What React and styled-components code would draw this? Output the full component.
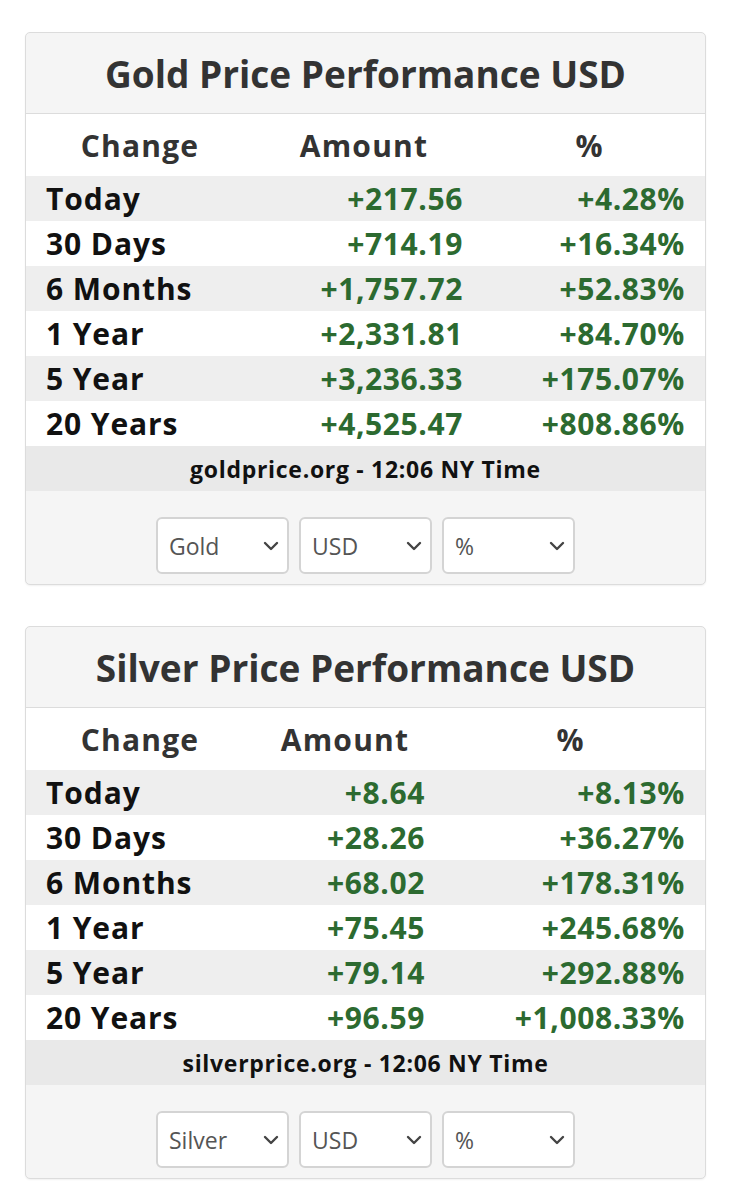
import React from 'react';
import styled, { createGlobalStyle } from 'styled-components';
import { ChevronDown } from 'lucide-react';

const GlobalStyle = createGlobalStyle`
  body {
    margin: 0;
    background: #fff;
    font-family: "Open Sans", "Liberation Sans", sans-serif;
  }
`;

const gold = {
  title: 'Gold Price Performance USD',
  source: 'goldprice.org - 12:06 NY Time',
  metal: 'Gold',
  cols: [228, 220, 231],
  rows: [
    ['Today', '+217.56', '+4.28%'],
    ['30 Days', '+714.19', '+16.34%'],
    ['6 Months', '+1,757.72', '+52.83%'],
    ['1 Year', '+2,331.81', '+84.70%'],
    ['5 Year', '+3,236.33', '+175.07%'],
    ['20 Years', '+4,525.47', '+808.86%'],
  ],
};

const silver = {
  title: 'Silver Price Performance USD',
  source: 'silverprice.org - 12:06 NY Time',
  metal: 'Silver',
  cols: [228, 182, 269],
  rows: [
    ['Today', '+8.64', '+8.13%'],
    ['30 Days', '+28.26', '+36.27%'],
    ['6 Months', '+68.02', '+178.31%'],
    ['1 Year', '+75.45', '+245.68%'],
    ['5 Year', '+79.14', '+292.88%'],
    ['20 Years', '+96.59', '+1,008.33%'],
  ],
};

function PerfCard({ data }) {
  return (
    <Card>
      <Title>{data.title}</Title>
      <Table>
        <colgroup>
          {data.cols.map((w, i) => <col key={i} style={{ width: w }} />)}
        </colgroup>
        <thead>
          <tr>
            <Th>Change</Th>
            <Th>Amount</Th>
            <Th>%</Th>
          </tr>
        </thead>
        <tbody>
          {data.rows.map((r, i) => (
            <Row key={r[0]} $striped={i % 2 === 0}>
              <Label>{r[0]}</Label>
              <Value>{r[1]}</Value>
              <Value $last>{r[2]}</Value>
            </Row>
          ))}
        </tbody>
      </Table>
      <Source>{data.source}</Source>
      <Controls>
        <SelectBox value={data.metal} />
        <SelectBox value="USD" />
        <SelectBox value="%" />
      </Controls>
    </Card>
  );
}

function SelectBox({ value }) {
  return (
    <SelectWrap>
      <span>{value}</span>
      <ChevronDown size={24} strokeWidth={2.4} color="#444" />
    </SelectWrap>
  );
}

export default function App() {
  return (
    <>
      <GlobalStyle />
      <Page>
        <PerfCard data={gold} />
        <PerfCard data={silver} />
      </Page>
    </>
  );
}

const Page = styled.div`
  padding: 32px 25px 20px 25px;
  display: flex;
  flex-direction: column;
  gap: 41px;
`;

const Card = styled.div`
  border: 1px solid #dcdcdc;
  border-radius: 5px;
  background: #f5f5f5;
  overflow: hidden;
  box-shadow: 0 1px 2px rgba(0, 0, 0, 0.06);
`;

const Title = styled.h2`
  margin: 0;
  height: 80px;
  display: flex;
  align-items: center;
  justify-content: center;
  font-size: 37px;
  font-weight: 700;
  color: #333;
  border-bottom: 1px solid #dcdcdc;
`;

const Table = styled.table`
  width: 100%;
  border-collapse: collapse;
  table-layout: fixed;
  background: #fff;
`;

const Th = styled.th`
  height: 62px;
  padding: 0;
  font-size: 30px;
  font-weight: 700;
  letter-spacing: 1.2px;
  color: #333;
  text-align: center;
  vertical-align: middle;
`;

const Row = styled.tr`
  background: ${({ $striped }) => ($striped ? '#eeeeee' : '#fff')};
  height: 45px;
`;

const Label = styled.td`
  padding: 0 0 0 20px;
  font-size: 30px;
  font-weight: 700;
  letter-spacing: 0.9px;
  color: #111;
  text-align: left;
  white-space: nowrap;
`;

const Value = styled.td`
  padding: 0 ${({ $last }) => ($last ? '20px' : '11px')} 0 0;
  font-size: 30px;
  font-weight: 700;
  letter-spacing: 0.6px;
  color: #2c6a30;
  text-align: right;
  white-space: nowrap;
`;

const Source = styled.div`
  height: 45px;
  display: flex;
  align-items: center;
  justify-content: center;
  background: #e9e9e9;
  font-size: 23px;
  font-weight: 700;
  letter-spacing: 0.7px;
  color: #111;
`;

const Controls = styled.div`
  display: flex;
  justify-content: center;
  gap: 10px;
  padding: 26px 0 10px 0;
`;

const SelectWrap = styled.div`
  width: 133px;
  height: 57px;
  box-sizing: border-box;
  border: 2px solid #d4d4d4;
  border-radius: 6px;
  background: #fff;
  display: flex;
  align-items: center;
  justify-content: space-between;
  padding: 0 4px 0 11px;
  font-size: 23px;
  color: #555;
`;
